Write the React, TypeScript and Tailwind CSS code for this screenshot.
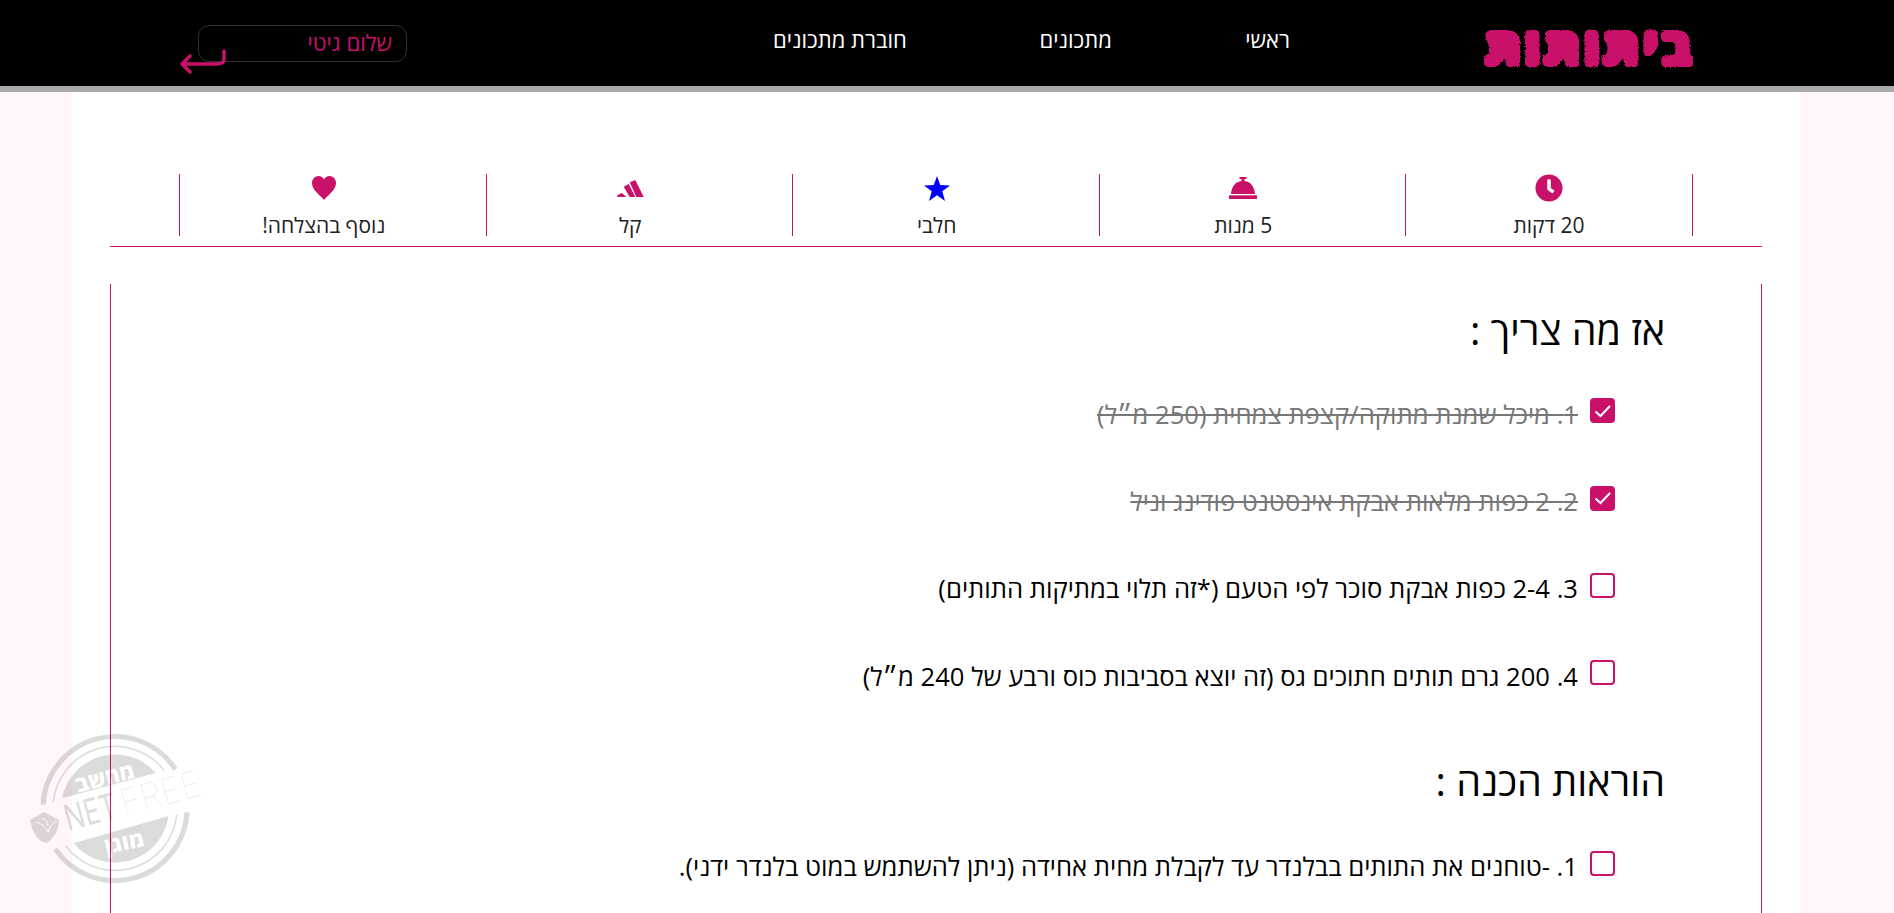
import { FaClock } from 'react-icons/fa';

const PINK = '#c9116a';

function StripesIcon() {
  return (
    <svg viewBox="0 0 27 17" className="h-[17px] w-[27px]" fill="#c9116a">
      <path d="M0.700 15 L5 13 L9.300 17 L0 17 Z" />
      <path d="M6.700 6.700 L11.700 4 L18.300 17 L12.700 17 Z" />
      <path d="M12.700 2.300 L18.300 0 L26.700 17 L19.300 17 Z" />
    </svg>
  );
}

function BellIcon() {
  return (
    <svg viewBox="0 0 28 22" className="h-[22px] w-[28px]" fill="#c9116a">
      <path d="M10.500 0 H17.500 V2 H15.500 V4 C21.500 4.500 25.500 9.500 26 17 H2 C2.500 9.500 6.500 4.500 12.500 4 V2 H10.500 Z" />
      <path d="M0 18.300 H28 V22 H0 Z" />
    </svg>
  );
}

function StarIcon() {
  return (
    <svg viewBox="0 0 26 25" className="h-[25px] w-[26px]" fill="#0000ff">
      <path d="M13 0 L16.200 9 L26 9.400 L18.300 15.300 L21 25 L13 19.300 L5 25 L7.700 15.300 L0 9.400 L9.800 9 Z" />
    </svg>
  );
}

function HeartIcon() {
  return (
    <svg viewBox="0 0 24 24" className="h-[24px] w-[24px]" fill="#c9116a">
      <path d="M12 24 C8 19 0 14 0 7 C0 3 3 0 6.500 0 C9 0 11 1.500 12 3.500 C13 1.500 15 0 17.500 0 C21 0 24 3 24 7 C24 14 16 19 12 24 Z" />
    </svg>
  );
}

function Stat({ icon, label, wide }: { icon: React.ReactNode; label: string; wide?: boolean }) {
  return (
    <div
      className={`flex h-[62px] flex-col items-center border-l border-[#c9116a] ${
        wide ? 'w-[288px] border-r' : 'w-[306.500px] pr-[18px]'
      }`}
    >
      <div className="flex h-[28px] shrink-0 items-center">{icon}</div>
      <div className="mt-[9px] shrink-0 text-[21px] leading-[28px] text-[#222]">{label}</div>
    </div>
  );
}

function Item({ text, done }: { text: string; done?: boolean }) {
  return (
    <div className="flex h-[87.400px] items-center">
      <div
        className={`flex h-[25px] w-[25px] -translate-y-[4px] items-center justify-center rounded-[4px] border-2 border-[#c9116a] ${
          done ? 'bg-[#c9116a]' : 'bg-white'
        }`}
      >
        {done && (
          <svg viewBox="0 0 18 18" className="h-[18px] w-[18px]" fill="none" stroke="white" strokeWidth="2">
            <path d="M1.500 9.500 L6.500 14 L16 4" />
          </svg>
        )}
      </div>
      <div className={`mr-[12px] text-[25.600px] ${done ? 'text-[#777] line-through' : 'text-black'}`}>{text}</div>
    </div>
  );
}

// arc around the stamp centre, angles in degrees clockwise from +x
function arc(r: number, from: number, to: number) {
  const cx = 115;
  const cy = 808.5;
  const pt = (a: number) => {
    const t = (a * Math.PI) / 180;
    return `${(cx + r * Math.cos(t)).toFixed(1)} ${(cy + r * Math.sin(t)).toFixed(1)}`;
  };
  return `M${pt(from)} A${r} ${r} 0 0 1 ${pt(to)}`;
}

// the netfree stamp sits over the page, coordinates are page pixels
function Stamp() {
  const gray = 'rgba(40,30,35,0.16)';
  return (
    <svg viewBox="0 710 240 203" className="pointer-events-none absolute left-0 top-[710px] h-[203px] w-[240px]">
      <defs>
        <mask id="stamp-holes" maskUnits="userSpaceOnUse" x="0" y="710" width="240" height="203">
          <rect x="0" y="710" width="240" height="203" fill="white" />
          <g textAnchor="middle" fontFamily="'Open Sans','Liberation Sans',sans-serif" fontWeight="800" fontSize="22" fill="black">
            <text x="107" y="785" transform="rotate(-15 107 785)">מחשב</text>
            <text x="126" y="850" transform="rotate(-12 126 850)">מוגן</text>
          </g>
        </mask>
      </defs>
      <g mask="url(#stamp-holes)">
        <g fill="none" stroke={gray}>
          <path d={arc(72, 183, 327)} strokeWidth="5" />
          <path d={arc(72, 3, 146)} strokeWidth="5" />
          <path d={arc(62, 186, 322)} strokeWidth="1.500" />
          <path d={arc(62, 6, 143)} strokeWidth="1.500" />
        </g>
        <path d={`${arc(54, 191, 319)} Z`} fill={gray} />
        <path d={`${arc(54, 8, 140)} Z`} fill={gray} />
      </g>
      <g transform="rotate(-15 68 831)" fontFamily="'Inter','Liberation Sans',sans-serif" fontSize="36" direction="ltr">
        <text x="68" y="831" fill={gray} fontWeight="400" textLength="53" lengthAdjust="spacingAndGlyphs">NET</text>
        <text x="126" y="831" fill="rgba(40,30,35,0.12)" fontWeight="100" textLength="82" lengthAdjust="spacingAndGlyphs">FREE</text>
      </g>
      <path d="M30 820 L44 812 L59 820 C59 830 54 838 47 843 C38 842 32 832 30 820 Z" fill={gray} />
      <path d="M36 822 Q44 824 48 832 Q50 824 57 821 M42 818 Q48 820 48 826" fill="none" stroke="white" strokeWidth="1" />
    </svg>
  );
}

export default function App() {
  return (
    <div
      dir="rtl"
      className="relative h-[913px] overflow-hidden bg-[#fff5fb] font-['Open_Sans','Liberation_Sans',sans-serif]"
    >
      <svg className="absolute h-0 w-0">
        <filter id="rough" colorInterpolationFilters="sRGB" x="-5%" y="-20%" width="110%" height="140%">
          <feGaussianBlur in="SourceGraphic" stdDeviation="2" result="soft" />
          <feComponentTransfer in="soft" result="blob">
            <feFuncA type="linear" slope="12" intercept="-5" />
          </feComponentTransfer>
          <feTurbulence type="fractalNoise" baseFrequency="0.8" numOctaves="1" result="noise" />
          <feDisplacementMap in="blob" in2="noise" scale="3.500" />
        </filter>
      </svg>
      <header className="flex h-[92px] items-center border-b-[6px] border-[#aaaaaa] bg-black text-white">
        <div className="mr-[199px] mt-[3px] w-[212px] whitespace-nowrap text-[52px] font-extrabold leading-none tracking-[3px] text-[#c9116a] [-webkit-text-stroke:4px_#c9116a] [filter:url(#rough)]">
          ביתותות
        </div>
        <nav className="mb-[7px] mr-[193px] flex w-[517px] items-center whitespace-nowrap text-[22px]">
          <a className="w-[179px]">ראשי</a>
          <a className="w-[206px]">מתכונים</a>
          <a>חוברת מתכונים</a>
        </nav>
        <div className="relative mr-[366px] mt-[1px] h-[37px] w-[209px] rounded-[11px] border border-[#3a2c32] pr-[14px] text-[22px] leading-[33px] text-[#c9116a]">
          שלום גיטי
          <svg
            viewBox="0 0 46 26"
            className="absolute -bottom-[14px] -left-[19px] h-[26px] w-[46px]"
            fill="none"
            stroke="#c9116a"
            strokeWidth="3.500"
            strokeLinecap="round"
            strokeLinejoin="round"
          >
            <path d="M44 2 V10 Q44 15 37 15 H2 M10 7 L2 15 L10 23" />
          </svg>
        </div>
      </header>

      <main className="mr-[94px] h-[821px] w-[1728px] bg-white px-[38px] pt-[82px]">
        <section className="border-b border-[#c9116a] pb-[10px] pr-[69px]">
          <div className="flex">
            <Stat wide label="20 דקות" icon={<FaClock className="h-[28px] w-[28px]" color={PINK} />} />
            <Stat label="5 מנות" icon={<BellIcon />} />
            <Stat label="חלבי" icon={<StarIcon />} />
            <Stat label="קל" icon={<StripesIcon />} />
            <Stat label="נוסף בהצלחה!" icon={<HeartIcon />} />
          </div>
        </section>

        <section className="mt-[37px] h-[700px] border-x border-[#c9116a] pr-[96px]">
          <h2 className="pt-[21px] text-[39.500px] leading-[50px] text-black">אז מה צריך :</h2>
          <div className="mr-[50px] mt-[16px]">
            <Item done text="1. מיכל שמנת מתוקה/קצפת צמחית (250 מ״ל)" />
            <Item done text="2. 2 כפות מלאות אבקת אינסטנט פודינג וניל" />
            <Item text="3. 2-4 כפות אבקת סוכר לפי הטעם (*זה תלוי במתיקות התותים)" />
            <Item text="4. 200 גרם תותים חתוכים גס (זה יוצא בסביבות כוס ורבע של 240 מ״ל)" />
          </div>
          <h2 className="mt-[35px] text-[39.500px] leading-[50px] text-black">הוראות הכנה :</h2>
          <div className="mr-[50px] mt-[18px]">
            <Item text="1. -טוחנים את התותים בבלנדר עד לקבלת מחית אחידה (ניתן להשתמש במוט בלנדר ידני)." />
          </div>
        </section>
      </main>
      <Stamp />
    </div>
  );
}
